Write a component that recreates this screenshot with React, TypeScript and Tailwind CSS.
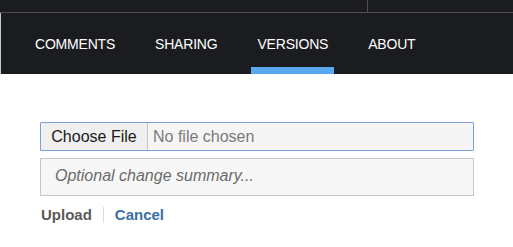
import React from "react";

const tabs = ["COMMENTS", "SHARING", "VERSIONS", "ABOUT"];

export default function App() {
  return (
    <div className="w-[513px] h-[247px] bg-white overflow-hidden font-['Liberation_Sans',Arial,sans-serif]">
      {/* top strip */}
      <div className="h-[12px] bg-[#1b1c1f] flex">
        <div className="w-[368px] border-r border-[#4d4d4f]" />
      </div>
      <div className="h-px bg-[#505052]" />

      {/* tabs */}
      <div className="h-[61px] bg-[#1b1c1f] border-l border-[#c8c8c8] flex items-stretch pl-[28px] gap-[28px]">
        {tabs.map((t) => (
          <div
            key={t}
            className={
              "px-[6px] flex items-center text-[14px] text-white tracking-[-0.2px] border-b-[7px] pt-[9px] " +
              (t === "VERSIONS" ? "border-[#5aa8f2]" : "border-transparent")
            }
          >
            {t}
          </div>
        ))}
      </div>

      {/* content */}
      <div className="pt-[48px] pl-[40px] w-[474px]">
        <div className="h-[29px] border border-[#7b9fd6] bg-[#f5f5f5] flex items-stretch rounded-[1px]">
          <div className="w-[107px] bg-[#efefef] border-r border-[#c4c4c4] flex items-center justify-center text-[16px] text-[#1a1a1a]">
            Choose File
          </div>
          <div className="flex items-center pl-[5px] text-[16px] text-[#7a7a7a]">No file chosen</div>
        </div>
        <div className="mt-[7px] h-[38px] border border-[#c8c8c8] bg-[#f7f7f7] flex items-center pl-[14px] pb-[3px] text-[16px] italic text-[#6b6b6b]">
          Optional change summary...
        </div>
        <div className="mt-[8px] flex items-center text-[15px] font-bold">
          <span className="text-[#5a5a5a] pl-px">Upload</span>
          <span className="mx-[11px] w-px h-[16px] bg-[#d3dde8]" />
          <span className="text-[#3a6ea8]">Cancel</span>
        </div>
      </div>
    </div>
  );
}
